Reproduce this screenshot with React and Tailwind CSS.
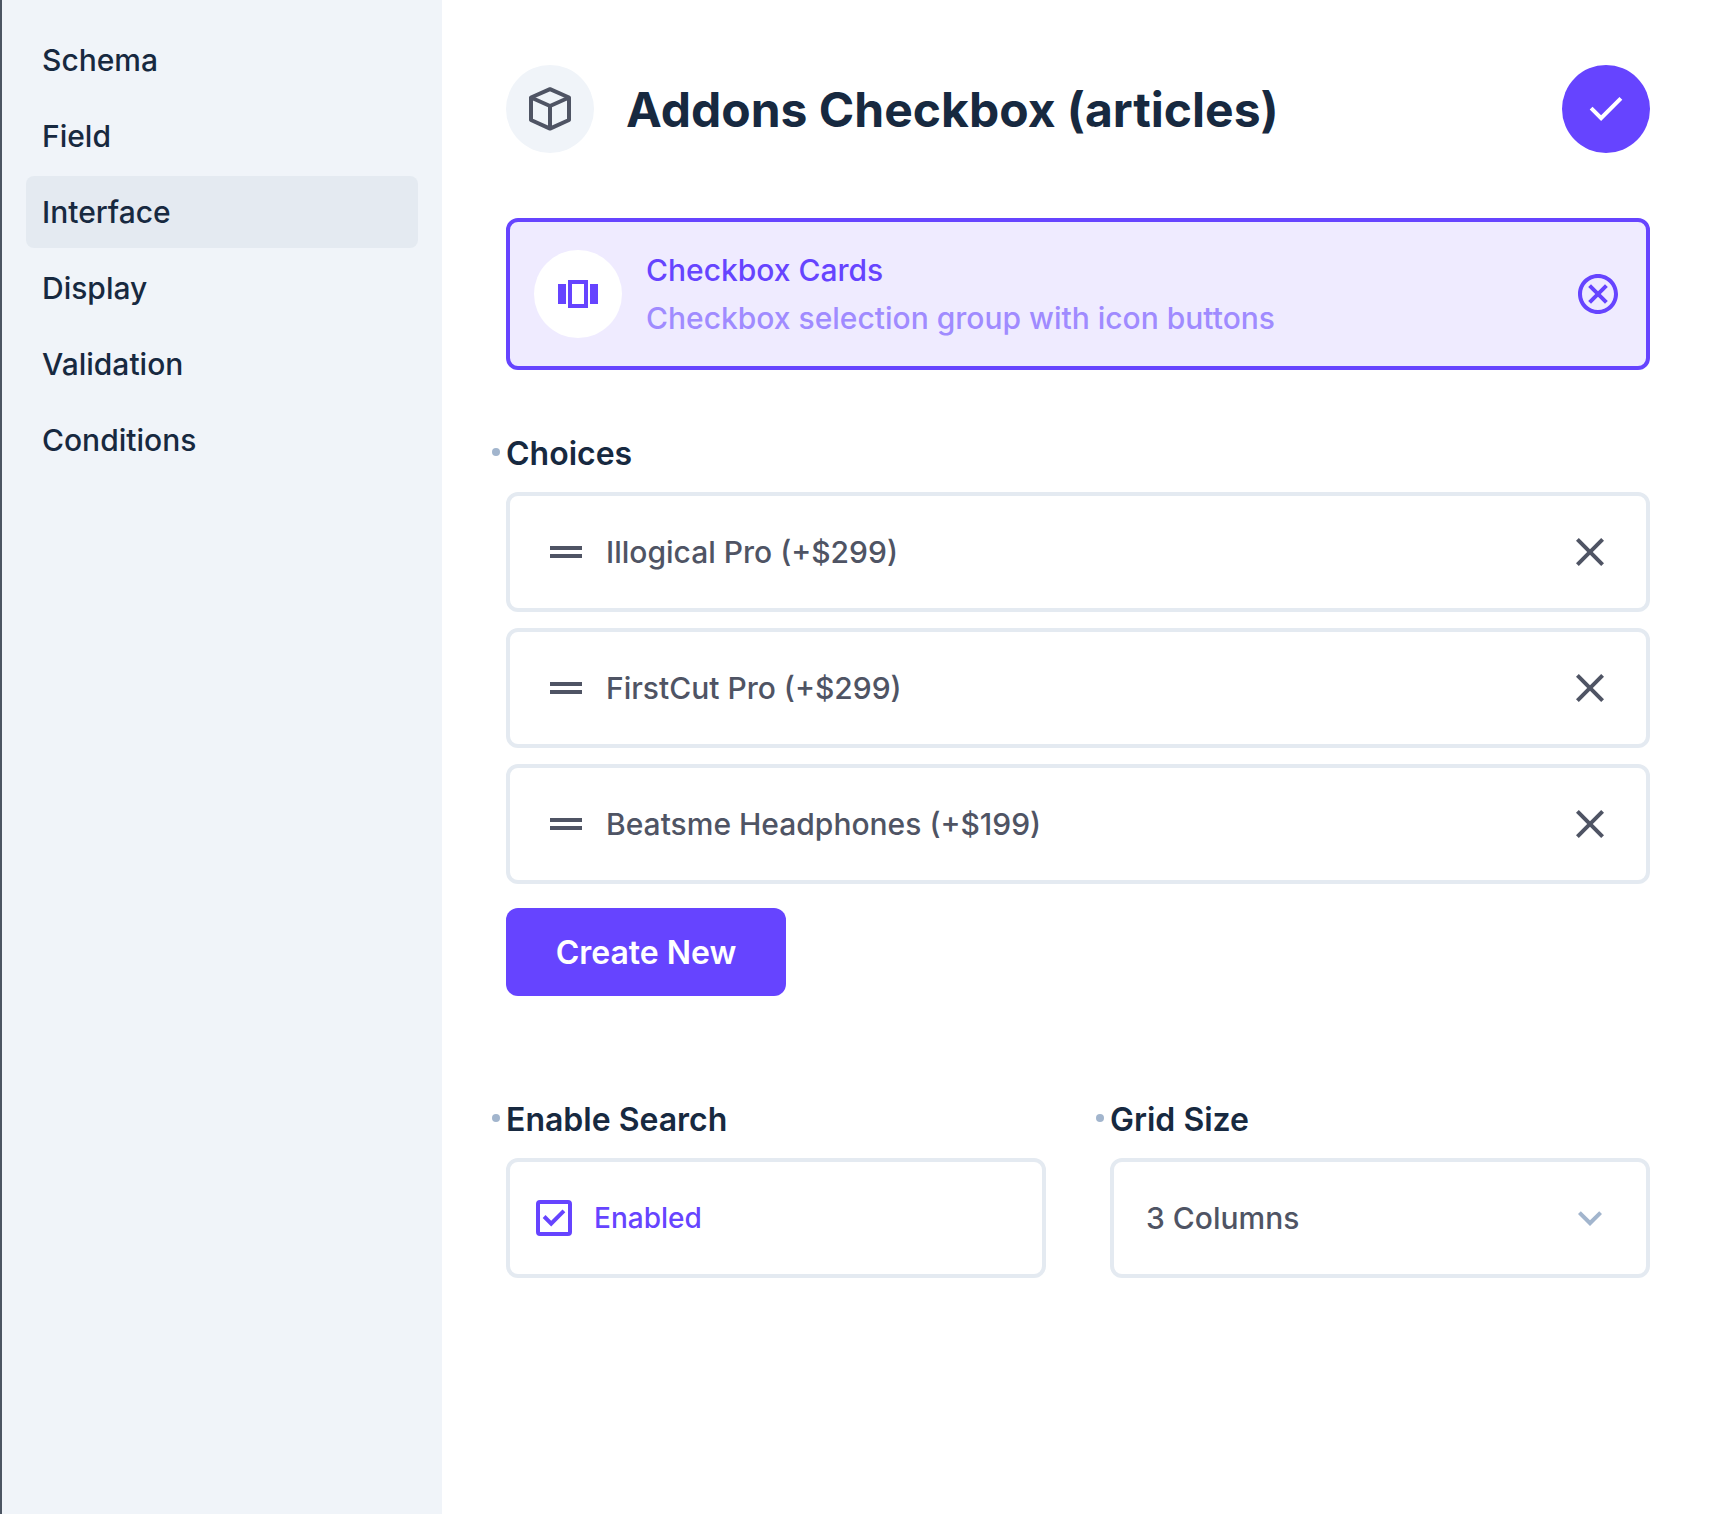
import { useState } from "react";

const navItems = ["Schema", "Field", "Interface", "Display", "Validation", "Conditions"];
const initialChoices = ["Illogical Pro (+$299)", "FirstCut Pro (+$299)", "Beatsme Headphones (+$199)"];

const paths = {
  carousel: "M2 7h4v10H2V7zm5 12h10V5H7v14zM9 7h6v10H9V7zm9 0h4v10h-4V7z",
  check: "M9.55 18 3.85 12.3 5.275 10.875 9.55 15.15 18.725 5.975 20.15 7.4Z",
  clear:
    "M15.5 7.1 12 10.6 8.5 7.1 7.1 8.5 10.6 12 7.1 15.5 8.5 16.9 12 13.4 15.5 16.9 16.9 15.5 13.4 12 16.9 8.5zM12 2C6.47 2 2 6.47 2 12s4.47 10 10 10 10-4.47 10-10S17.53 2 12 2zm0 18c-4.41 0-8-3.59-8-8s3.59-8 8-8 8 3.59 8 8-3.59 8-8 8z",
  close:
    "M19 6.41 17.59 5 12 10.59 6.41 5 5 6.41 10.59 12 5 17.59 6.41 19 12 13.41 17.59 19 19 17.59 13.41 12z",
  drag: "M20 9H4v2h16V9zM4 15h16v-2H4v2z",
  expand: "M16.59 8.59 12 13.17 7.41 8.59 6 10l6 6 6-6z",
  tick: "M10.6 16.2 17.65 9.15 16.25 7.75 10.6 13.4 7.75 10.55 6.35 11.95z",
};

function Icon({ name, className = "" }) {
  return (
    <svg viewBox="0 0 24 24" className={`size-12 shrink-0 ${className}`} fill="currentColor" aria-hidden="true">
      <path d={paths[name]} />
    </svg>
  );
}

function CubeIcon() {
  return (
    <svg
      viewBox="0 0 48 48"
      className="size-12"
      fill="none"
      stroke="currentColor"
      strokeWidth="4"
      strokeLinejoin="round"
      aria-hidden="true"
    >
      <path d="M24 4.2 43 12.5V35L24 43.6 5 35V12.5ZM5 12.5 24 21l19-8.500M24 21v22.600" />
    </svg>
  );
}

function FieldLabel({ as: Tag = "label", children, ...rest }) {
  return (
    <Tag {...rest} className="relative mb-4 block text-[32px] leading-[44px] font-semibold text-[#172940]">
      <span className="absolute top-4 -left-3.5 size-2 rounded-full bg-[#a2b5cd]" />
      {children}
    </Tag>
  );
}

export default function App() {
  const [choices, setChoices] = useState(initialChoices);
  const [enabled, setEnabled] = useState(true);

  return (
    <div className="flex min-h-screen bg-white font-['Inter',sans-serif] text-[30px] leading-[48px] font-medium text-[#4f5464]">
      <nav className="w-[442px] shrink-0 border-l-2 border-[#4c5562] bg-[#f0f4f9] p-6 text-[#172940]">
        <ul className="flex flex-col gap-1">
          {navItems.map((item) => (
            <li key={item}>
              <a
                href={`#${item.toLowerCase()}`}
                className={`block rounded-lg px-4 py-3 ${item === "Interface" ? "bg-[#e4eaf1]" : ""}`}
              >
                {item}
              </a>
            </li>
          ))}
        </ul>
      </nav>

      <main className="min-w-0 flex-1 px-16 py-[65px]">
        <header className="flex items-center gap-8">
          <span className="flex size-[88px] items-center justify-center rounded-full bg-[#f0f4f9]">
            <CubeIcon />
          </span>
          <h1 className="flex-1 pt-0.5 text-5xl font-bold text-[#172940]">Addons Checkbox (articles)</h1>
          <button
            type="button"
            aria-label="Save"
            className="flex size-[88px] items-center justify-center rounded-full bg-[#6644ff] text-white"
          >
            <Icon name="check" />
          </button>
        </header>

        <section className="mt-[65px] flex items-center gap-6 rounded-xl border-4 border-[#6644ff] bg-[#efebff] p-6 text-[#6644ff]">
          <span className="flex size-[88px] items-center justify-center rounded-full bg-white">
            <Icon name="carousel" />
          </span>
          <div className="flex-1">
            <p>Checkbox Cards</p>
            <p className="text-[#a08bff]">Checkbox selection group with icon buttons</p>
          </div>
          <button type="button" aria-label="Deselect interface">
            <Icon name="clear" />
          </button>
        </section>

        <section className="mt-[62px]">
          <FieldLabel as="h2">Choices</FieldLabel>
          <ul className="flex flex-col gap-4">
            {choices.map((choice) => (
              <li key={choice} className="flex items-center gap-4 rounded-xl border-4 border-[#e4eaf1] px-8 py-8">
                <Icon name="drag" className="cursor-grab" />
                <span className="flex-1">{choice}</span>
                <button
                  type="button"
                  aria-label={`Remove ${choice}`}
                  onClick={() => setChoices(choices.filter((c) => c !== choice))}
                >
                  <Icon name="close" />
                </button>
              </li>
            ))}
          </ul>
          <button
            type="button"
            className="mt-6 h-[88px] w-[280px] rounded-xl bg-[#6644ff] pt-0.5 text-[32px] font-semibold text-white"
          >
            Create New
          </button>
        </section>

        <div className="mt-[102px] grid grid-cols-2 gap-16">
          <section>
            <FieldLabel as="h2">Enable Search</FieldLabel>
            <label className="flex h-[120px] items-center gap-4 rounded-xl border-4 border-[#e4eaf1] px-5 text-[28px] text-[#6644ff]">
              <span className="relative flex size-12 items-center justify-center">
                <input
                  type="checkbox"
                  checked={enabled}
                  onChange={(e) => setEnabled(e.target.checked)}
                  className="size-9 appearance-none rounded border-4 border-[#6644ff]"
                />
                {enabled && <Icon name="tick" className="pointer-events-none absolute inset-0" />}
              </span>
              Enabled
            </label>
          </section>
          <section>
            <FieldLabel htmlFor="grid-size">Grid Size</FieldLabel>
            <div className="relative">
              <select
                id="grid-size"
                defaultValue="3"
                className="h-[120px] w-full appearance-none rounded-xl border-4 border-[#e4eaf1] bg-white px-8"
              >
                <option value="2">2 Columns</option>
                <option value="3">3 Columns</option>
                <option value="4">4 Columns</option>
              </select>
              <Icon name="expand" className="pointer-events-none absolute top-9 right-9 text-[#a2b5cd]" />
            </div>
          </section>
        </div>
      </main>
    </div>
  );
}
